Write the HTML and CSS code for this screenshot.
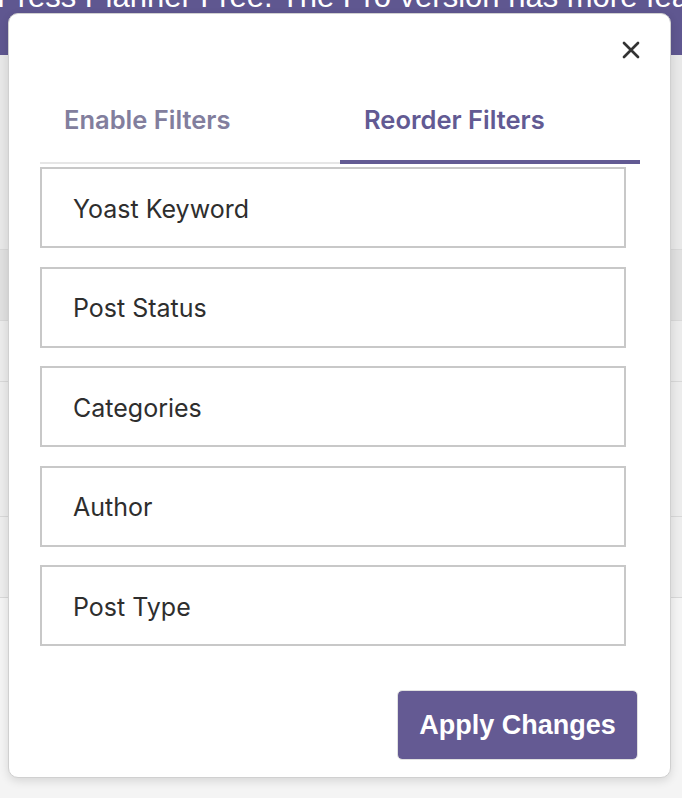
FILE: index.html
```html
<!DOCTYPE html>
<html lang="en">
<head>
<meta charset="utf-8">
<title>Reorder Filters</title>
<link rel="stylesheet" href="styles.css">
</head>
<body>
<div class="page">
  <div class="banner"><span class="banner-text">Press Planner Free. The Pro version has more features and support.</span></div>
  <div class="backdrop">
    <div class="bg-row bg-row-a"></div>
    <div class="bg-row bg-row-b"></div>
    <div class="bg-row bg-row-c"></div>
    <div class="bg-row bg-row-d"></div>
    <div class="bg-row bg-row-e"></div>
    <div class="bg-row bg-row-f"></div>
  </div>
</div>

<div class="modal" role="dialog" aria-label="Filters">
  <div class="modal-head">
    <button class="close" aria-label="Close">
      <svg width="18" height="18" viewBox="0 0 18 18" aria-hidden="true">
        <path d="M2 2 L16 16 M16 2 L2 16" stroke="#333" stroke-width="2.7" stroke-linecap="round" fill="none"/>
      </svg>
    </button>
  </div>
  <div class="tabs">
    <div class="tab">Enable Filters</div>
    <div class="tab tab-active">Reorder Filters</div>
  </div>
  <div class="filter-list">
    <div class="filter-item">Yoast Keyword</div>
    <div class="filter-item">Post Status</div>
    <div class="filter-item">Categories</div>
    <div class="filter-item">Author</div>
    <div class="filter-item">Post Type</div>
  </div>
  <div class="modal-foot">
    <button class="apply">Apply Changes</button>
  </div>
</div>
</body>
</html>
```

FILE: styles.css
```css
html, body {
  margin: 0;
  padding: 0;
}

body {
  width: 682px;
  height: 798px;
  overflow: hidden;
  position: relative;
  background: #f2f2f2;
  font-family: Inter, "Noto Sans", sans-serif;
}

.page {
  display: flex;
  flex-direction: column;
  height: 798px;
}

.banner {
  height: 55px;
  background: #5f5790;
  overflow: hidden;
  white-space: nowrap;
  flex: none;
}

.banner-text {
  display: block;
  margin-top: -19px;
  margin-left: -3px;
  font-family: "Liberation Sans", Arial, sans-serif;
  font-size: 31px;
  line-height: 31px;
  color: #ffffff;
}

.backdrop {
  flex: 1;
  display: flex;
  flex-direction: column;
  background: #e9e9e9;
}

.bg-row {
  border-bottom: 1px solid #d8d8d8;
  flex: none;
}

.bg-row-a { height: 194px; background: #e8e8e8; }
.bg-row-b { height: 70px; background: #e0e0e0; }
.bg-row-c { height: 60px; background: #ebebeb; }
.bg-row-d { height: 134px; background: #ececec; }
.bg-row-e { height: 80px; background: #ededed; }
.bg-row-f { flex: 1; background: #f4f4f4; border-bottom: none; }

.modal {
  position: absolute;
  left: 8px;
  top: 13px;
  width: 663px;
  height: 765px;
  box-sizing: border-box;
  border: 1px solid #d0d0d0;
  border-radius: 10px;
  background: #ffffff;
  box-shadow: 0 3px 10px rgba(0, 0, 0, 0.12);
  display: flex;
  flex-direction: column;
}

.modal-head {
  display: flex;
  justify-content: flex-end;
  padding: 27px 30px 0 0;
}

.close {
  border: none;
  background: none;
  padding: 0;
  width: 18px;
  height: 18px;
  display: block;
  cursor: pointer;
}

.close svg {
  display: block;
}

.tabs {
  display: flex;
  margin: 46px 30px 0 31px;
  border-bottom: 2px solid #e6e6e6;
}

.tab {
  flex: 1;
  padding: 0 0 25px 24px;
  font-size: 25.5px;
  line-height: 30px;
  font-weight: 600;
  color: #827e9d;
  border-bottom: 4px solid transparent;
  margin-bottom: -2px;
}

.tab-active {
  color: #625a93;
  border-bottom-color: #625a93;
}

.filter-list {
  display: flex;
  flex-direction: column;
  gap: 18.5px;
  margin: 3px 44px 0 31px;
}

.filter-item {
  height: 81px;
  box-sizing: border-box;
  border: 2px solid #c8c8c8;
  padding-left: 31px;
  padding-top: 2px;
  display: flex;
  align-items: center;
  font-size: 25px;
  color: #2e2e2e;
}

.modal-foot {
  display: flex;
  justify-content: flex-end;
  padding: 44px 32px 0 0;
}

.apply {
  width: 241px;
  height: 70px;
  box-sizing: border-box;
  border: 1px solid #e0e0e0;
  border-radius: 5px;
  background: #645a93;
  background-clip: padding-box;
  color: #ffffff;
  font-family: "Liberation Sans", Arial, sans-serif;
  font-weight: bold;
  font-size: 27px;
  padding: 0;
  cursor: pointer;
}
```
